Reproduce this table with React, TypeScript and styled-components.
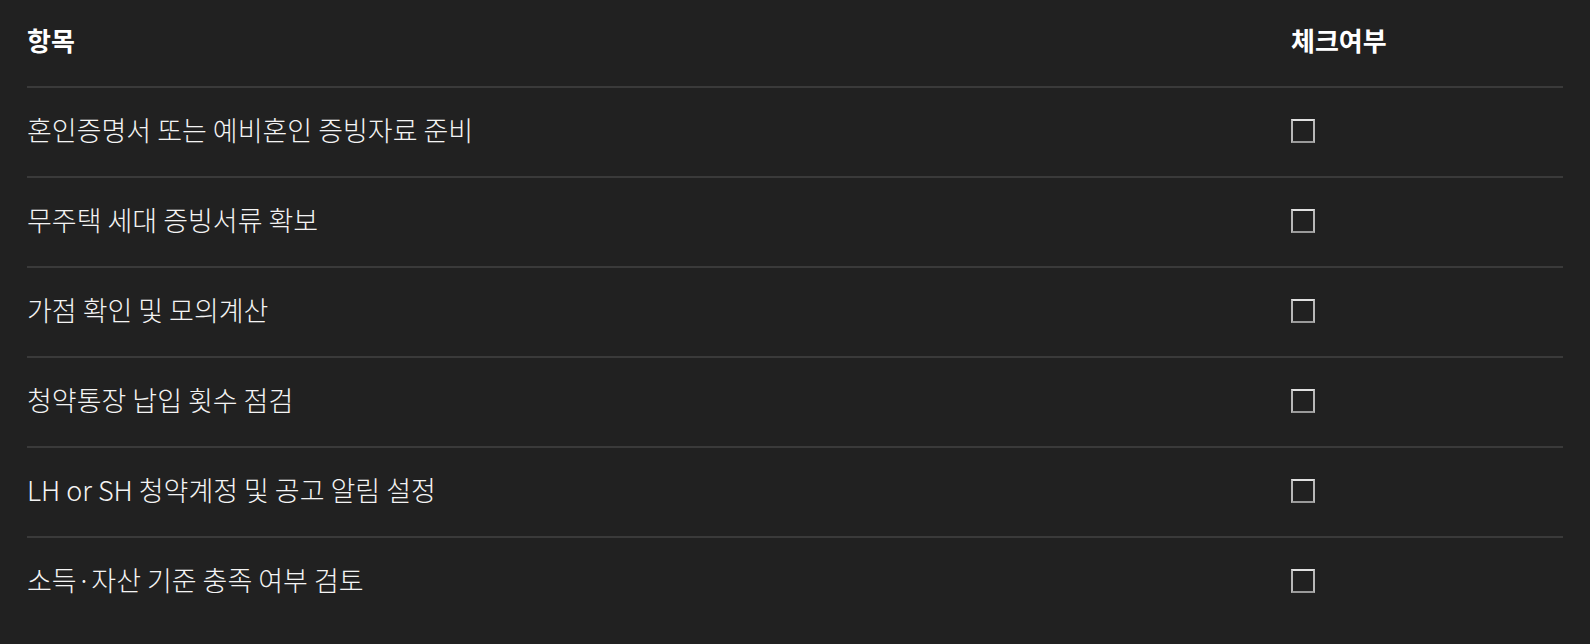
import React from "react";
import styled, { createGlobalStyle } from "styled-components";

const Global = createGlobalStyle`
  html, body { margin: 0; padding: 0; background: #212121; }
  body { font-family: "Noto Sans CJK KR", "Noto Sans", sans-serif; color: #f2f2f2; }
`;

const Page = styled.div`
  padding: 0 27px;
  min-height: 644px;
  box-sizing: border-box;
`;

const Table = styled.div`
  display: flex;
  flex-direction: column;
`;

const Row = styled.div<{ $head?: boolean; $last?: boolean }>`
  display: grid;
  grid-template-columns: 1264px 1fr;
  align-items: center;
  height: ${(p) => (p.$head ? 80 : 88)}px;
  padding-bottom: ${(p) => (p.$head ? 6 : 0)}px;
  border-bottom: ${(p) => (p.$last ? "none" : "2px solid #3a3a3a")};
`;

const HeadCell = styled.div`
  font-size: 26px;
  font-weight: 700;
  letter-spacing: 0;
  color: #ffffff;
  line-height: 1.2;
`;

const Cell = styled.div`
  font-size: 27px;
  font-weight: 300;
  letter-spacing: 0;
  color: #f4f4f4;
  line-height: 1.2;
  margin-top: -3px;
`;

const Box = styled.span`
  display: block;
  width: 20px;
  height: 20px;
  margin-top: -2px;
  border: 2px solid #9a9a9a;
  border-top-color: #e0e0e0;
  border-left-color: #b8b8b8;
  border-right-color: #b8b8b8;
  background: transparent;
`;

const items = [
  "혼인증명서 또는 예비혼인 증빙자료 준비",
  "무주택 세대 증빙서류 확보",
  "가점 확인 및 모의계산",
  "청약통장 납입 횟수 점검",
  "LH or SH 청약계정 및 공고 알림 설정",
  "소득·자산 기준 충족 여부 검토",
];

export default function App() {
  return (
    <>
      <Global />
      <Page>
        <Table>
          <Row $head>
            <HeadCell>항목</HeadCell>
            <HeadCell>체크여부</HeadCell>
          </Row>
          {items.map((t, i) => (
            <Row key={t} $last={i === items.length - 1}>
              <Cell>{t}</Cell>
              <div>
                <Box role="checkbox" aria-checked="false" />
              </div>
            </Row>
          ))}
        </Table>
      </Page>
    </>
  );
}
